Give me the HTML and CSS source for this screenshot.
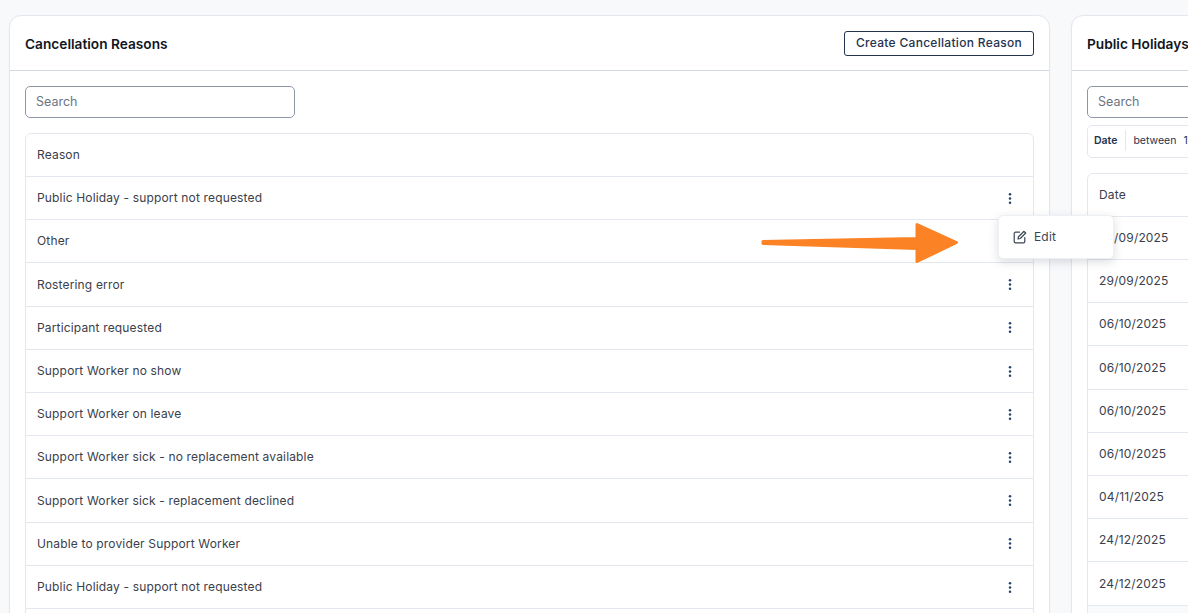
FILE: index.html
```html
<!DOCTYPE html>
<html lang="en">
<head>
<meta charset="utf-8">
<title>Settings</title>
<link rel="stylesheet" href="styles.css">
</head>
<body>
<svg width="0" height="0" class="defs"><defs>
<g id="dots"><circle cx="2" cy="2.2" r="1.25"/><circle cx="2" cy="6.5" r="1.25"/><circle cx="2" cy="10.8" r="1.25"/></g>
</defs></svg>
<main class="page">
  <section class="card card-left">
    <header class="card-head">
      <h2>Cancellation Reasons</h2>
      <button class="btn">Create Cancellation Reason</button>
    </header>
    <div class="card-body">
      <div class="search search-left">Search</div>
      <div class="table table-left">
        <div class="row head"><span>Reason</span></div>
        <div class="row"><span>Public Holiday - support not requested</span><svg class="kebab" viewBox="0 0 4 13"><use href="#dots"/></svg></div>
        <div class="row"><span>Other</span></div>
        <div class="row"><span>Rostering error</span><svg class="kebab" viewBox="0 0 4 13"><use href="#dots"/></svg></div>
        <div class="row"><span>Participant requested</span><svg class="kebab" viewBox="0 0 4 13"><use href="#dots"/></svg></div>
        <div class="row"><span>Support Worker no show</span><svg class="kebab" viewBox="0 0 4 13"><use href="#dots"/></svg></div>
        <div class="row"><span>Support Worker on leave</span><svg class="kebab" viewBox="0 0 4 13"><use href="#dots"/></svg></div>
        <div class="row"><span>Support Worker sick - no replacement available</span><svg class="kebab" viewBox="0 0 4 13"><use href="#dots"/></svg></div>
        <div class="row"><span>Support Worker sick - replacement declined</span><svg class="kebab" viewBox="0 0 4 13"><use href="#dots"/></svg></div>
        <div class="row"><span>Unable to provider Support Worker</span><svg class="kebab" viewBox="0 0 4 13"><use href="#dots"/></svg></div>
        <div class="row"><span>Public Holiday - support not requested</span><svg class="kebab" viewBox="0 0 4 13"><use href="#dots"/></svg></div>
        <div class="row"></div>
      </div>
    </div>
  </section>
  <section class="card card-right">
    <header class="card-head">
      <h2>Public Holidays</h2>
    </header>
    <div class="card-body">
      <div class="search search-right">Search</div>
      <div class="filter"><b>Date</b><i></i><span>between 1/09/2025</span></div>
      <div class="table">
        <div class="row head"><span>Date</span></div>
        <div class="row"><span>29/09/2025</span></div>
        <div class="row"><span>29/09/2025</span></div>
        <div class="row"><span>06/10/2025</span></div>
        <div class="row"><span>06/10/2025</span></div>
        <div class="row"><span>06/10/2025</span></div>
        <div class="row"><span>06/10/2025</span></div>
        <div class="row"><span>04/11/2025</span></div>
        <div class="row"><span>24/12/2025</span></div>
        <div class="row"><span>24/12/2025</span></div>
        <div class="row foot"></div>
      </div>
    </div>
  </section>
</main>
<svg class="arrow" viewBox="0 0 200 44" width="200" height="44"><path d="M3 19.5 157 16.5V2.5L196.5 20.5 157 39.5V26.5L3 21.5Z" fill="#fb8225" stroke="#fb8225" stroke-width="3" stroke-linejoin="round"/></svg>
<div class="menu">
  <svg viewBox="0 0 14 14" width="14" height="14" fill="none" stroke="#3c4456" stroke-width="1.2" stroke-linecap="round" stroke-linejoin="round"><path d="M6.5 2.2H2.6A1.4 1.4 0 0 0 1.2 3.6v7.8a1.4 1.4 0 0 0 1.4 1.4h7.8a1.4 1.4 0 0 0 1.4-1.4V7.5"/><path d="M11 1.3 12.7 3 7.3 8.5 5 9l.5-2.3Z"/></svg>
  <span>Edit</span>
</div>
</body>
</html>
```
FILE: styles.css
```css
* { box-sizing: border-box; }
html, body { margin: 0; height: 613px; overflow: hidden; }
body { background: #f8f9fb; font-family: Inter, "Liberation Sans", sans-serif; color: #3a404c; font-size: 12px; letter-spacing: .16px; position: relative; }
.defs { position: absolute; }
.page { display: flex; gap: 21px; padding: 15px 0 0 9px; width: 1700px; }
.card { background: #fff; border: 1px solid #e3e7ee; border-radius: 12px 12px 0 0; height: 640px; overflow: hidden; box-shadow: 0 1px 2px rgba(30,40,60,.05); }
.card-left { width: 1041px; }
.card-right { width: 500px; }
.card-head { height: 55px; padding: 0 15px; display: flex; align-items: center; justify-content: space-between; border-bottom: 1px solid #d3d8e1; }
h2 { margin: 2px 0 0; font-size: 13.7px; font-weight: 600; letter-spacing: 0; color: #11151d; }
.btn { width: 190px; height: 25px; margin-top: 1px; padding: 0 0 2px; background: #fff; border: 1px solid #24334f; border-radius: 3px; color: #24334f; font: 500 12px Inter, "Liberation Sans", sans-serif; letter-spacing: .3px; }
.card-body { padding: 15px 15px 0; }
.search { height: 32px; border: 1px solid #8e96a6; border-radius: 5px; padding: 0 10px 2px; display: flex; align-items: center; color: #6c7484; font-size: 12.5px; letter-spacing: 0; }
.search-left { width: 270px; margin-bottom: 15px; }
.search-right { width: 400px; margin-bottom: 7px; }
.filter { display: flex; align-items: center; height: 32.5px; width: 400px; border: 1px solid #e3e7ee; border-radius: 5px; padding: 0 6px 1px; font-size: 10.5px; letter-spacing: 0; word-spacing: 4px; color: #24334f; margin-bottom: 15px; }
.filter b { font-weight: 600; }
.filter i { width: 1px; height: 21px; background: #e3e7ee; margin: 0 7px 0 8px; }
.table { border: 1px solid #e3e7ee; border-radius: 6px 6px 0 0; }
.row { height: 43.2px; padding: 0 11px; display: flex; align-items: center; justify-content: space-between; border-bottom: 1px solid #e3e7ee; }
.row span { margin-bottom: .8px; }
.row:last-child { border-bottom: 0; }
.row.head { height: 43.4px; }
.table-left .row.head { height: 43px; }
.foot { background: #f9fafb; }
.kebab { width: 4px; height: 13px; fill: #24446e; margin-right: 10px; margin-top: .6px; }
.arrow { position: absolute; left: 760px; top: 222px; }
.menu { position: absolute; left: 998px; top: 215px; width: 116px; height: 44px; padding: 0 0 1px 14px; background: #fff; border-radius: 5px; border: 1px solid #edf0f4; box-shadow: 0 3px 10px rgba(30,40,60,.16); display: flex; align-items: center; gap: 7px; font-size: 12px; color: #3c4456; }
```
